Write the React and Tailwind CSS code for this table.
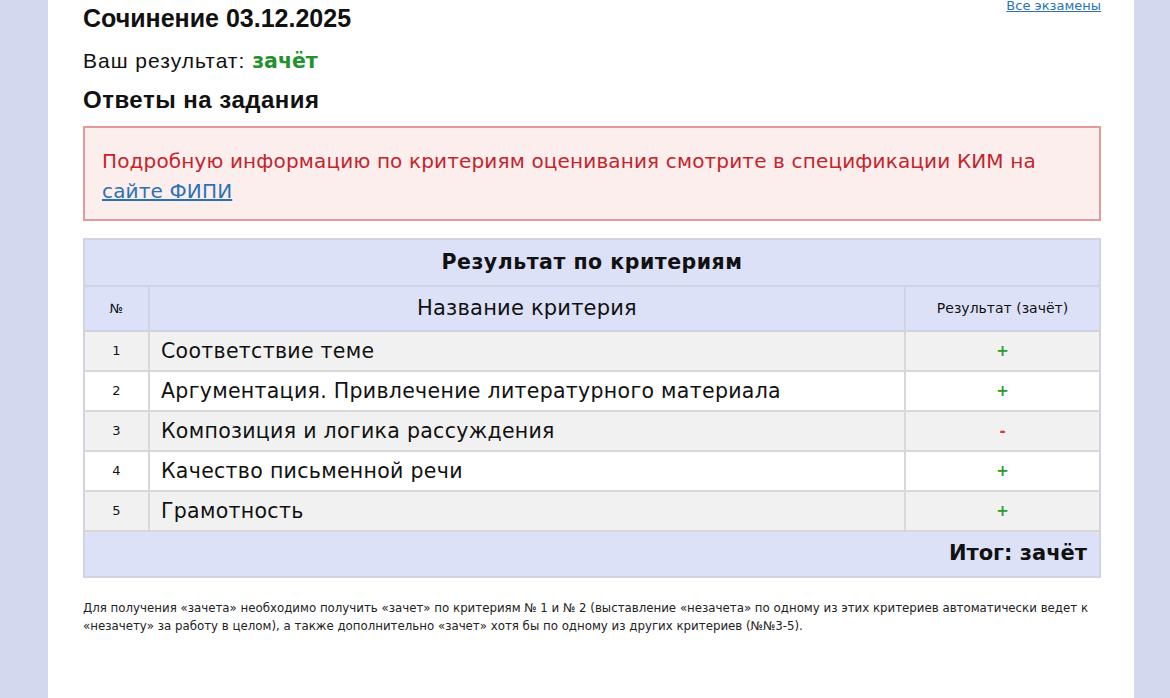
const rows = [
  { n: 1, name: "Соответствие теме", ok: true },
  { n: 2, name: "Аргументация. Привлечение литературного материала", ok: true },
  { n: 3, name: "Композиция и логика рассуждения", ok: false },
  { n: 4, name: "Качество письменной речи", ok: true },
  { n: 5, name: "Грамотность", ok: true },
];

const verdana = "font-['DejaVu_Sans','Verdana',sans-serif]";

export default function App() {
  return (
    <div className="min-h-[698px] bg-[#d3d8ef] pr-[36px] pl-[48px] flex">
      <div className="flex-1 bg-white pl-[35px] pr-[33px] pb-10 font-['Liberation_Sans',Arial,sans-serif] text-[#111]">
        <div className="flex justify-between items-start">
          <h1 className="text-[25px] font-bold leading-[36px]">Сочинение 03.12.2025</h1>
          <a href="#" className={`${verdana} text-[13px] text-[#2a72b5] underline leading-[14px] -mt-[1px]`}>
            Все экзамены
          </a>
        </div>
        <p className="text-[21px] tracking-[1px] mt-[10px] leading-[30px]">
          Ваш результат: <span className={`${verdana} font-bold text-[20.5px] tracking-normal text-[#24912e]`}>зачёт</span>
        </p>
        <h2 className="text-[24px] tracking-[0.5px] font-bold leading-[30px] mt-[9px]">Ответы на задания</h2>

        <div className={`${verdana} mt-[11px] border-2 border-[#e29a9a] bg-[#fdeeee] text-[#c4242b] text-[20px] tracking-[0.15px] leading-[30px] px-[17px] pt-[18px] pb-[13px]`}>
          Подробную информацию по критериям оценивания смотрите в спецификации КИМ на{" "}
          <a href="#" className="text-[#2a72b5] underline">сайте ФИПИ</a>
        </div>

        <table className={`${verdana} mt-[17px] w-full border-collapse border-2 border-[#cfd3e3] text-[#111]`}>
          <thead>
            <tr className="bg-[#dce1f7] h-[47px]">
              <th colSpan={3} className="text-[20.5px] tracking-[0.5px] font-bold border-b-2 border-[#cfd3e3]">Результат по критериям</th>
            </tr>
            <tr className="bg-[#dce1f7] h-[45px]">
              <th className="w-[65px] text-[13px] font-normal border-r-2 border-b-2 border-[#cfd3e3]">№</th>
              <th className="text-[21px] tracking-[0.2px] font-normal border-r-2 border-b-2 border-[#cfd3e3]">Название критерия</th>
              <th className="w-[195px] text-[14px] font-normal border-b-2 border-[#cfd3e3]">Результат (зачёт)</th>
            </tr>
          </thead>
          <tbody>
            {rows.map((r, i) => (
              <tr key={r.n} className={`h-[40px] ${i % 2 === 0 ? "bg-[#f1f1f1]" : "bg-white"}`}>
                <td className="text-center text-[13px] border-r-2 border-b-2 border-[#d8d8d8]">{r.n}</td>
                <td className="pl-[11px] text-[20.5px] tracking-[0.3px] border-r-2 border-b-2 border-[#d8d8d8]">{r.name}</td>
                <td className={`text-center text-[15px] font-bold border-b-2 border-[#d8d8d8] ${r.ok ? "text-[#2b9a2b]" : "text-[#e0343a]"}`}>
                  {r.ok ? "+" : "-"}
                </td>
              </tr>
            ))}
          </tbody>
          <tfoot>
            <tr className="bg-[#dce1f7] h-[46px]">
              <td colSpan={3} className="text-right pr-[12px] text-[21px] font-bold">Итог: зачёт</td>
            </tr>
          </tfoot>
        </table>

        <p className={`${verdana} mt-[21px] text-[11.8px] leading-[18px] text-[#222]`}>
          Для получения «зачета» необходимо получить «зачет» по критериям № 1 и № 2 (выставление «незачета» по одному из этих критериев автоматически ведет к «незачету» за работу в целом), а также дополнительно «зачет» хотя бы по одному из других критериев (№№3-5).
        </p>
      </div>
    </div>
  );
}
